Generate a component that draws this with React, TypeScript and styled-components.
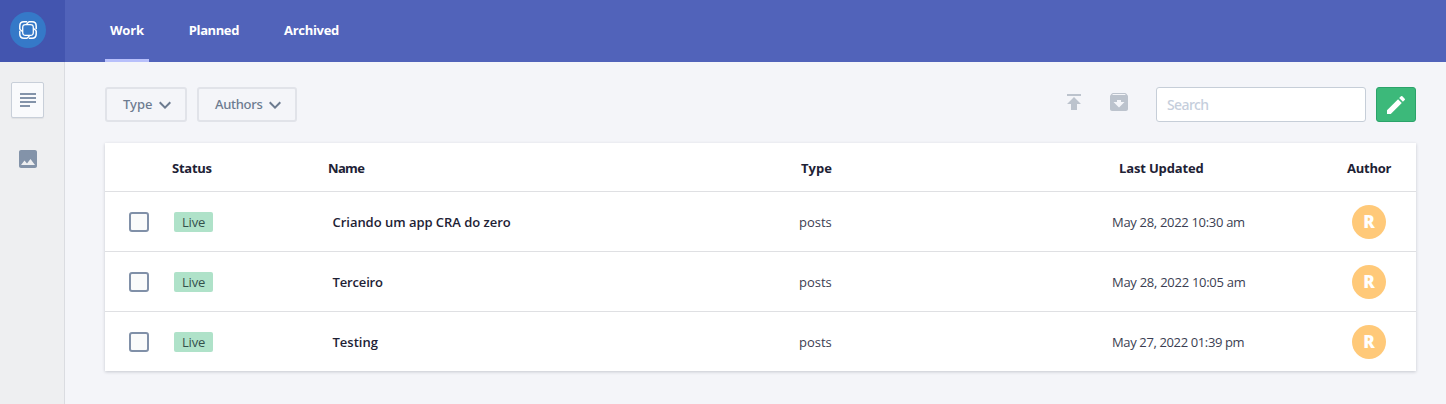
import React from "react";
import styled, { createGlobalStyle } from "styled-components";
import { MdSubject, MdImage, MdPublish, MdArchive, MdEdit, MdExpandMore } from "react-icons/md";

const GlobalStyle = createGlobalStyle`
  * { box-sizing: border-box; }
  body {
    margin: 0;
    background: #f4f5f9;
    font-family: "Open Sans", "Noto Sans", sans-serif;
    font-size: 13px;
    color: #1e2235;
  }
  button, input { font: inherit; }
`;

const Text = styled.span<{ $track?: number }>`
  letter-spacing: ${(p) => p.$track ?? 0}px;
  white-space: nowrap;
`;

const Page = styled.div`
  display: grid;
  grid-template-columns: 65px 1fr;
  grid-template-rows: 62px 1fr;
  height: 404px;
  overflow: hidden;
`;

const Brand = styled.div`
  background: #4355af;
  padding: 12px 10px;
`;

const BrandCircle = styled.div`
  width: 36px;
  height: 36px;
  border-radius: 50%;
  background: #3579c8;
  display: grid;
  place-items: center;
`;

const TopBar = styled.nav`
  background: #5163ba;
  display: flex;
  gap: 35px;
  padding-left: 40px;
`;

const Tab = styled.a<{ $active?: boolean }>`
  display: flex;
  align-items: center;
  height: 62px;
  padding: 0 5px;
  color: #fff;
  font-weight: 700;
  border-bottom: 3px solid ${(p) => (p.$active ? "#b8c0fb" : "transparent")};
`;

const Sidebar = styled.aside`
  background: #eeeff1;
  border-right: 1px solid #dadce1;
  display: flex;
  flex-direction: column;
  align-items: flex-start;
  gap: 23px;
  padding: 20px 0 0 11px;
  color: #8393a9;
`;

const SideButton = styled.button<{ $active?: boolean }>`
  display: grid;
  place-items: center;
  width: 33px;
  height: 36px;
  padding: 0;
  color: inherit;
  border-radius: 2px;
  border: 1px solid ${(p) => (p.$active ? "#c8cfd9" : "transparent")};
  background: ${(p) => (p.$active ? "#f9fafc" : "transparent")};
  box-shadow: ${(p) => (p.$active ? "0 1px 1px rgba(0,0,0,.06)" : "none")};
`;

const Main = styled.main`
  padding: 25px 30px 0 40px;
`;

const Toolbar = styled.div`
  display: flex;
  gap: 10px;
  height: 35px;
  margin-bottom: 21px;
`;

const Filter = styled.button<{ $width: number }>`
  display: flex;
  align-items: center;
  justify-content: space-between;
  width: ${(p) => p.$width}px;
  padding: 0 8px 0 16px;
  border: 2px solid #e1e3e9;
  border-radius: 3px;
  background: transparent;
  color: #6c7b90;
  font-family: "Noto Sans", sans-serif;
  font-weight: 500;
  line-height: 1;
  ${Text} { padding-bottom: 1px; }
`;

const Actions = styled.div`
  display: flex;
  gap: 21px;
  margin: 3px 15px 0 auto;
  color: #bcc3cd;
`;

const SearchField = styled.input`
  width: 210px;
  padding: 0 10px;
  border: 1px solid #c6ced8;
  border-radius: 3px;
  background: #fff;
  outline: none;
  font-family: "Noto Sans", sans-serif;
  font-size: 14px;
  font-weight: 500;
  letter-spacing: -0.6px;
  &::placeholder { color: #c5cedc; opacity: 1; }
`;

const CreateButton = styled.button`
  display: grid;
  place-items: center;
  width: 40px;
  padding: 0;
  border: 1px solid #2ba36a;
  border-radius: 3px;
  background: #3cb97a;
  color: #fff;
`;

const Table = styled.section`
  background: #fff;
  box-shadow: 0 1px 3px rgba(40, 50, 70, 0.22);
`;

const Row = styled.div`
  display: grid;
  grid-template-columns: 69px 158.5px 466.5px 313px 240px 64px;
  align-items: center;
  height: 60px;
  border-top: 1px solid #dfe0e3;
`;

const HeadRow = styled.div`
  display: grid;
  grid-template-columns: 67px 156px 473px 318px 228px 69px;
  align-items: center;
  height: 48px;
  padding-top: 1px;
  font-weight: 700;
`;

const Checkbox = styled.div`
  width: 20px;
  height: 20px;
  margin-left: 24px;
  border: 2px solid #8090a8;
  border-radius: 3px;
  background: #fafbfb;
`;

const Badge = styled.div`
  width: 39px;
  height: 20px;
  border-radius: 2px;
  background: #afe2c9;
  color: #34504c;
  text-align: center;
  line-height: 20px;
`;

const Title = styled.div`
  font-weight: 600;
`;

const Cell = styled.div`
  color: #3b3e52;
`;

const Avatar = styled.div`
  display: grid;
  place-items: center;
  width: 34px;
  height: 34px;
  border-radius: 50%;
  background: #ffc979;
  color: #fff;
  font-size: 17px;
  font-weight: 800;
`;

const Logo = () => (
  <svg width="20" height="20" viewBox="0 0 20 20" fill="none" stroke="#fff" strokeWidth="1.5">
    {[0, 90, 180, 270].map((angle) => (
      <g key={angle} transform={`rotate(${angle} 10 10)`}>
        <path d="M1.8 9.4V6Q1.8 1.8 6 1.8H9.2" />
        <path d="M4.7 11.6V7.5Q4.7 4.7 7.5 4.7H8.2L10.8 1.8" strokeWidth="1.3" />
      </g>
    ))}
  </svg>
);

const rows = [
  { title: "Criando um app CRA do zero", track: -0.03, date: "May 28, 2022 10:30 am", dateTrack: -0.31 },
  { title: "Terceiro", track: -0.15, date: "May 28, 2022 10:05 am", dateTrack: -0.28 },
  { title: "Testing", track: 0, date: "May 27, 2022 01:39 pm", dateTrack: -0.37 },
];

export default function App() {
  return (
    <>
      <GlobalStyle />
      <Page>
        <Brand><BrandCircle><Logo /></BrandCircle></Brand>
        <TopBar>
          <Tab $active><Text $track={-0.2}>Work</Text></Tab>
          <Tab><Text $track={-0.4}>Planned</Text></Tab>
          <Tab><Text $track={-0.3}>Archived</Text></Tab>
        </TopBar>
        <Sidebar>
          <SideButton $active><MdSubject size={24} /></SideButton>
          <SideButton><MdImage size={24} /></SideButton>
        </Sidebar>
        <Main>
          <Toolbar>
            <Filter $width={82}><Text>Type</Text><MdExpandMore size={24} /></Filter>
            <Filter $width={100}><Text $track={-0.3}>Authors</Text><MdExpandMore size={24} /></Filter>
            <Actions><MdPublish size={24} /><MdArchive size={24} /></Actions>
            <SearchField placeholder="Search" />
            <CreateButton><MdEdit size={24} /></CreateButton>
          </Toolbar>
          <Table>
            <HeadRow>
              <span />
              <Text $track={-0.25}>Status</Text>
              <Text $track={-0.65}>Name</Text>
              <Text>Type</Text>
              <Text $track={-0.15}>Last Updated</Text>
              <Text $track={-0.25}>Author</Text>
            </HeadRow>
            {rows.map((row) => (
              <Row key={row.title}>
                <Checkbox />
                <Badge><Text $track={-0.2}>Live</Text></Badge>
                <Title><Text $track={row.track}>{row.title}</Text></Title>
                <Cell><Text>posts</Text></Cell>
                <Cell><Text $track={row.dateTrack}>{row.date}</Text></Cell>
                <Avatar>R</Avatar>
              </Row>
            ))}
          </Table>
        </Main>
      </Page>
    </>
  );
}
